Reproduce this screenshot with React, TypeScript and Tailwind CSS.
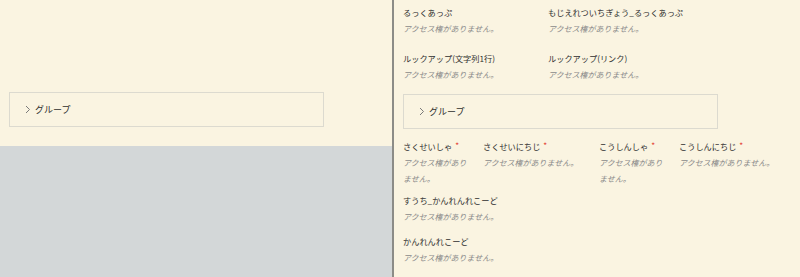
import React from 'react';

const font = { fontFamily: '"Noto Sans CJK JP", "Noto Sans", sans-serif' };

const Chevron: React.FC = () => (
  <svg width="6" height="9" viewBox="0 0 6 9" className="shrink-0">
    <path d="M1 1 L4.5 4.5 L1 8" fill="none" stroke="#7a7a7a" strokeWidth="1" />
  </svg>
);

const GroupBox: React.FC = () => (
  <div className="w-[315px] h-[35px] border border-[#dcdacf] flex items-center pl-[15px] gap-[4px]">
    <Chevron />
    <span className="text-[9px] text-[#2e2e2e]">グループ</span>
  </div>
);

const Field: React.FC<{ label: string; required?: boolean; className?: string }> = ({ label, required, className }) => (
  <div className={className}>
    <div className="text-[8.2px] leading-[16px] text-[#2f2f2f] whitespace-nowrap">
      {label}
      {required && <span className="text-[#e5483a] ml-[3px] relative -top-[1px]">*</span>}
    </div>
    <div className="mt-[1px] text-[8px] leading-[16px] italic text-[#8a8a8a]">アクセス権がありません。</div>
  </div>
);

const App: React.FC = () => {
  return (
    <div className="w-[800px] h-[277px] flex overflow-hidden bg-[#faf4e1]" style={font}>
      {/* left pane */}
      <div className="w-[392px] flex flex-col">
        <div className="h-[146px] pt-[92px] pl-[9px]">
          <GroupBox />
        </div>
        <div className="flex-1 bg-[#d3d7d8]" />
      </div>
      <div className="w-[2px] bg-[#8c8c87]" />

      {/* right pane */}
      <div className="flex-1 pl-[9px] pt-[4px]">
        <div className="flex">
          <Field label="るっくあっぷ" className="w-[145px]" />
          <Field label="もじえれついちぎょう_るっくあっぷ" />
        </div>
        <div className="flex mt-[13px]">
          <Field label="ルックアップ(文字列1行)" className="w-[145px]" />
          <Field label="ルックアップ(リンク)" />
        </div>
        <div className="mt-[11px]">
          <GroupBox />
        </div>
        <div className="flex mt-[9px]">
          <Field label="さくせいしゃ" required className="w-[80px] pr-[14px]" />
          <Field label="さくせいにちじ" required className="w-[116px]" />
          <Field label="こうしんしゃ" required className="w-[80px] pr-[14px]" />
          <Field label="こうしんにちじ" required />
        </div>
        <Field label="すうち_かんれんれこーど" className="mt-[5px]" />
        <Field label="かんれんれこーど" className="mt-[8px]" />
      </div>
    </div>
  );
};

export default App;
